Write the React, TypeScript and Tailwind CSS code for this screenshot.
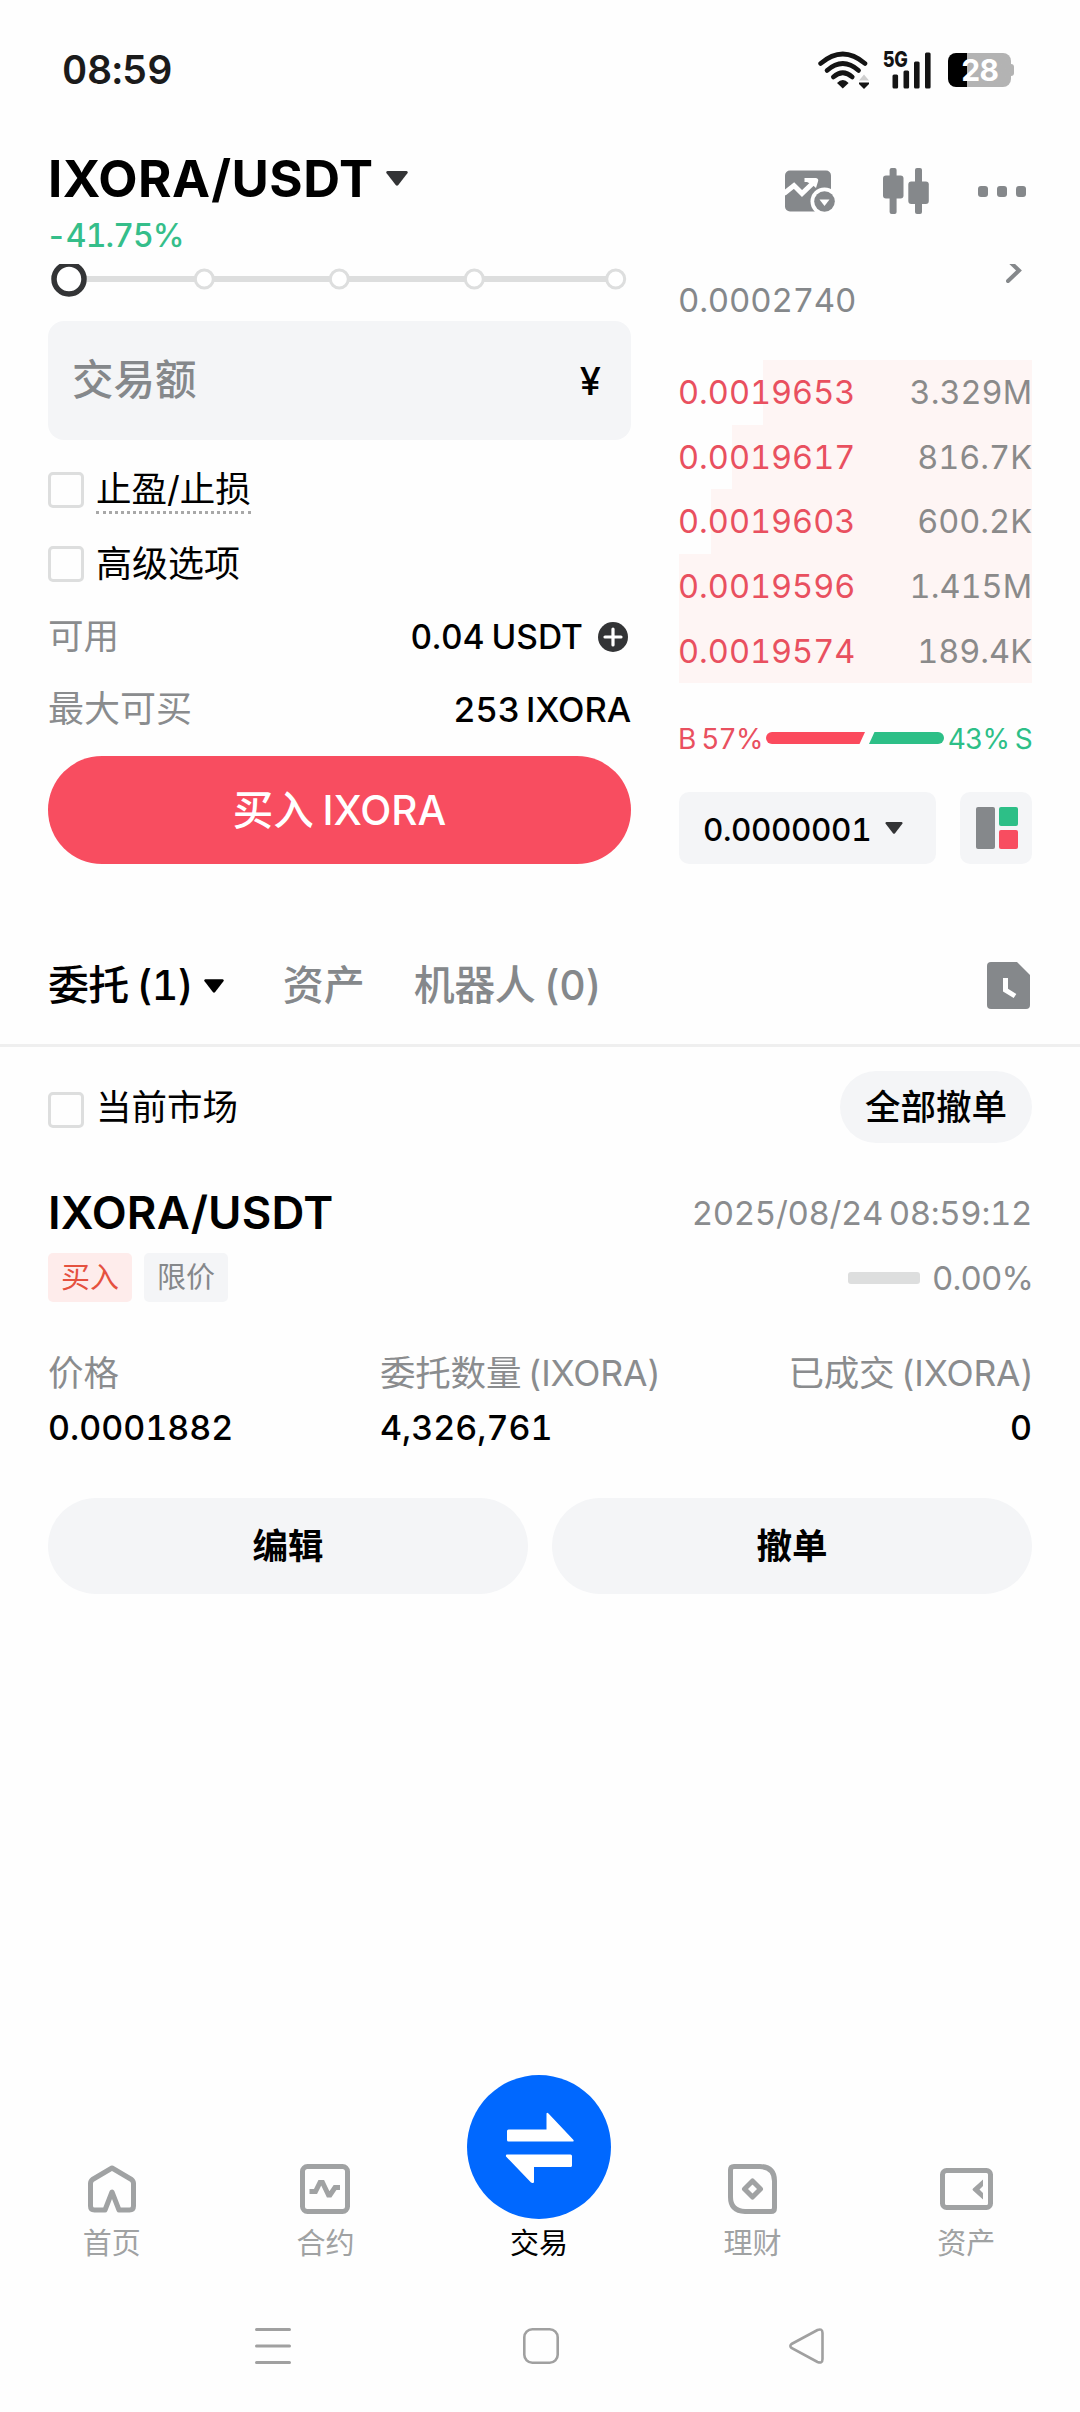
import type { ReactNode } from "react"
import { clsx } from "clsx"

interface Ask {
  price: string
  amount: string
  depth: number
}

const asks: Ask[] = [
  { price: "0.0019653", amount: "3.329M", depth: 269 },
  { price: "0.0019617", amount: "816.7K", depth: 300 },
  { price: "0.0019603", amount: "600.2K", depth: 321 },
  { price: "0.0019596", amount: "1.415M", depth: 353 },
  { price: "0.0019574", amount: "189.4K", depth: 353 },
]

function Caret({ className }: { className?: string }) {
  return (
    <svg viewBox="0 0 22 15" className={className} fill="currentColor">
      <path d="M1.5 0h19q2 .6.9 2.3L12.3 14q-1.3 1.6-2.6 0L.6 2.3Q-.5.6 1.5 0z" />
    </svg>
  )
}

function Checkbox({ className }: { className?: string }) {
  return <span className={clsx("size-9 shrink-0 rounded-[5px] border-3 border-[#dddede]", className)} />
}

function StatusBar() {
  return (
    <div className="flex h-[140px] items-center justify-between pr-[66px] pl-[62px]">
      <span className="text-[39px] font-semibold tracking-[-0.2px] text-[#1b1b1b]">08:59</span>
      <div className="flex items-center text-[#141414]">
        <svg width="52" height="38" viewBox="0 0 52 38" fill="none" stroke="currentColor" strokeWidth="4.6" strokeLinecap="round">
          <path d="M2.6 12.5Q24.8-6.5 47 12.5" />
          <path d="M9 19.5Q24.8 5.5 40.6 19.5" />
          <path d="M15.3 26Q24.8 17.5 34.3 26" />
          <path d="M19 32q5.8-6 11.600 0l-5.8 5.500z" fill="currentColor" stroke="none" />
          <path d="M41 29.5h10L46 23.5z" fill="#cfcfcf" stroke="none" />
          <path d="M41 31.5h10v1.5l-5 5-5-5z" fill="currentColor" stroke="none" />
        </svg>
        <div className="relative ml-[13px] h-[38px] w-[49px]">
          <span className="absolute -top-px left-0 origin-left scale-x-[0.82] text-[22px] leading-[18px] font-extrabold tracking-[-0.5px]">5G</span>
          <svg width="49" height="38" viewBox="0 0 49 38" fill="currentColor">
            <rect x="9.5" y="23.5" width="5.6" height="14" rx="1.5" />
            <rect x="20.5" y="19.5" width="5.6" height="18" rx="1.5" />
            <rect x="31" y="10.5" width="5.6" height="27" rx="1.5" />
            <rect x="42" y="1.5" width="5.6" height="36" rx="1.5" />
          </svg>
        </div>
        <div className="ml-4 flex items-center">
          <div className="flex h-[34px] w-[63px] items-center justify-center rounded-[8px] bg-linear-to-r from-black from-30% to-[#b3b3b3] to-30%">
            <span className="text-[30px] leading-none font-bold tracking-[-0.8px] text-white">28</span>
          </div>
          <div className="h-3 w-[3px] rounded-r-[3px] bg-[#b3b3b3]" />
        </div>
      </div>
    </div>
  )
}

function Header() {
  return (
    <div className="flex h-[124px] justify-between pr-[54px] pl-12">
      <div>
        <div className="flex h-[76px] items-center">
          <h1 className="w-[326px] pt-[2px] text-[51px] font-bold tracking-[0.5px] whitespace-nowrap">IXORA/USDT</h1>
          <Caret className="ml-3 h-[15px] w-[22px] text-[#333436]" />
        </div>
        <div className="-ml-0.5 flex h-10 items-center text-[32px] font-medium tracking-[-0.9px] text-[#35be8a]">-41.75%</div>
      </div>
      <div className="flex h-[102px] items-center text-[#85888b]">
        <svg width="50" height="42" viewBox="0 0 50 42">
          <rect x="0" y="0.5" width="46" height="41" rx="5" fill="currentColor" />
          <path d="M-1 23.5L9 15.5L17 23.5L28 13" fill="none" stroke="#fff" strokeWidth="5" />
          <path d="M19.5 8H31Q34 8.5 33 11.5L31 18L27 14.5L22 12H19.5z" fill="#fff" />
          <circle cx="39.5" cy="31.5" r="14" fill="#fff" />
          <circle cx="39.5" cy="31.5" r="10.3" fill="currentColor" />
          <path d="M34.5 29.5h10l-5 6.5z" fill="#fff" />
        </svg>
        <svg width="46" height="46" viewBox="0 0 46 46" className="ml-12" fill="currentColor">
          <rect x="6.6" y="0" width="7" height="46" rx="2" />
          <rect x="0" y="7.5" width="20.5" height="23" rx="3" />
          <rect x="32" y="0" width="7" height="46" rx="2" />
          <rect x="25.3" y="13.5" width="20.5" height="22.5" rx="3" />
        </svg>
        <svg width="48" height="11" viewBox="0 0 48 11" className="ml-[49px]" fill="currentColor">
          <rect x="0" width="10" height="11" rx="3" />
          <rect x="19" width="10" height="11" rx="3" />
          <rect x="38" width="10" height="11" rx="3" />
        </svg>
      </div>
    </div>
  )
}

function AmountSlider() {
  return (
    <svg width="583" height="57" viewBox="0 0 583 57" fill="#fff" className="overflow-hidden">
      <rect x="30" y="12" width="530" height="6" fill="#dddede" />
      <g stroke="#dddede" strokeWidth="3">
        <circle cx="156.3" cy="15" r="9" />
        <circle cx="291.3" cy="15" r="9" />
        <circle cx="426.3" cy="15" r="9" />
        <circle cx="567.7" cy="15" r="9" />
      </g>
      <circle cx="21" cy="15" r="15" stroke="#333436" strokeWidth="5.5" />
    </svg>
  )
}

function OrderForm() {
  return (
    <div className="flex w-[583px] flex-col">
      <AmountSlider />
      <div className="flex h-[119px] items-center justify-between rounded-[16px] bg-[#f4f5f7] pr-[30px] pl-6">
        <span className="text-[41.5px] font-medium text-[#85888b]">交易额</span>
        <span className="pt-0.5 text-[38px] font-medium">¥</span>
      </div>
      <div className="mt-6 flex h-[52px] items-center gap-3">
        <Checkbox />
        <span className="relative text-[35.5px] leading-[52px]">
          止盈/止损
          <span className="absolute inset-x-0 bottom-0.5 border-b-3 border-dotted border-[#a8a8a8]" />
        </span>
      </div>
      <div className="mt-[22px] flex h-[52px] items-center gap-3">
        <Checkbox />
        <span className="text-[36px]">高级选项</span>
      </div>
      <div className="mt-[11px] flex h-[72px] items-center justify-between">
        <span className="text-[35.5px] text-[#8a8c8e]">可用</span>
        <span className="flex items-center text-[33.5px] font-medium [word-spacing:-2px]">
          0.04 USDT
          <svg width="30" height="30" viewBox="0 0 30 30" className="mr-[3px] ml-[15px]">
            <circle cx="15" cy="15" r="15" fill="#333436" />
            <path d="M15 7v16M7 15h16" stroke="#fff" strokeWidth="3.2" strokeLinecap="round" />
          </svg>
        </span>
      </div>
      <div className="flex h-[72px] items-center justify-between">
        <span className="text-[36px] text-[#8a8c8e]">最大可买</span>
        <span className="pt-px text-[34.5px] font-medium tracking-[-0.1px] [word-spacing:-3px]">253 IXORA</span>
      </div>
      <button className="mt-[11px] h-[108px] rounded-full bg-[#f84d60] pt-0.5 text-[40.5px] font-medium text-white [word-spacing:-2px]">买入 IXORA</button>
    </div>
  )
}

function OrderBook() {
  return (
    <div className="w-[353px]">
      <div className="flex h-24 items-start justify-between overflow-hidden">
        <span className="-ml-px text-[33px] leading-[73px] tracking-[-0.2px] text-[#85888b]">0.0002740</span>
        <svg width="16" height="20" viewBox="0 0 16 20" className="mr-[10px]" fill="none" stroke="#85888b" strokeWidth="4">
          <path d="M2-4L13 6.5L2 17" strokeLinecap="round" />
        </svg>
      </div>
      {asks.map((ask) => (
        <div key={ask.price} className="relative flex h-[64.7px] items-center justify-between pt-0.5 text-[32.5px]">
          <div className="absolute inset-y-0 right-0 bg-[#fef5f4]" style={{ width: ask.depth }} />
          <span className="relative -ml-px text-[#e9505f]">{ask.price}</span>
          <span className="relative text-[#8a8a8a]">{ask.amount}</span>
        </div>
      ))}
      <div className="flex h-[108.5px] items-center justify-between text-[28px] tracking-[-0.8px] whitespace-nowrap [word-spacing:-1px]">
        <span className="-ml-px pt-0.5 text-[#e9505f]">B 57%</span>
        <svg width="178" height="12" viewBox="0 0 178 12" className="shrink-0">
          <path d="M6 0H99L93.5 12H6A6 6 0 0 1 6 0z" fill="#fb4a5d" />
          <path d="M108.5 0H172A6 6 0 0 1 172 12H103z" fill="#2dbf87" />
        </svg>
        <span className="pt-0.5 text-[#2dbf87]">43% S</span>
      </div>
      <div className="flex h-[72px] justify-between">
        <div className="flex w-[257px] items-center justify-between rounded-[10px] bg-[#f4f5f7] pr-[33px] pl-6">
          <span className="pt-[3px] text-[31.5px] font-medium tracking-[-0.4px]">0.0000001</span>
          <Caret className="h-3 w-[18px] text-[#333436]" />
        </div>
        <div className="flex w-[72px] items-center justify-center rounded-[10px] bg-[#f4f5f7]">
          <svg width="42" height="42" viewBox="0 0 42 42" className="ml-0.5">
            <rect width="19" height="42" rx="2" fill="#85888b" />
            <rect x="23" width="19" height="19" rx="2" fill="#2dbf87" />
            <rect x="23" y="23" width="19" height="19" rx="2" fill="#f84d60" />
          </svg>
        </div>
      </div>
    </div>
  )
}

function OrderTabs() {
  return (
    <div className="mt-[60px] flex h-[123px] items-center border-b-3 border-[#efefef] px-12 pt-0.5 text-[41px] text-[#85888b] [word-spacing:-2px]">
      <span className="flex items-center pt-px font-medium tracking-[-0.8px] text-black">
        委托 (1)
        <Caret className="ml-[11px] h-[14px] w-5" />
      </span>
      <span className="ml-[59px] pt-px font-medium">资产</span>
      <span className="ml-[49px] pt-px font-medium tracking-[-0.5px]">机器人 (0)</span>
      <svg width="43" height="47" viewBox="0 0 43 47" className="mr-[2px] ml-auto">
        <path d="M4 0H30L43 13V43q0 4-4 4H4q-4 0-4-4V4Q0 0 4 0z" fill="#85888b" />
        <path d="M18.5 16V28L28 34" fill="none" stroke="#fff" strokeWidth="5" />
      </svg>
    </div>
  )
}

function OrderItem() {
  return (
    <div className="px-12">
      <div className="mt-6 flex h-[72px] items-center gap-3">
        <Checkbox className="mt-[5px]" />
        <span className="pt-0.5 text-[35.5px]">当前市场</span>
        <button className="ml-auto h-[72px] w-48 rounded-full bg-[#f4f5f7] pt-0.5 text-[35.5px] font-medium">全部撤单</button>
      </div>

      <div className="mt-[38px] flex h-16 items-center justify-between">
        <h2 className="text-[45.5px] font-semibold tracking-[0.2px]">IXORA/USDT</h2>
        <span className="pt-0.5 text-[33px] tracking-[-0.35px] text-[#8a8c8e] [word-spacing:-3px]">2025/08/24 08:59:12</span>
      </div>
      <div className="mt-2 flex h-[49px] items-center gap-3 text-[29px]">
        <span className="flex h-full w-[84px] items-center justify-center rounded-[5px] bg-[#feeceb] text-[#e5513f]">买入</span>
        <span className="flex h-full w-[84px] items-center justify-center rounded-[5px] bg-[#f4f5f7] text-[#85888b]">限价</span>
        <span className="ml-auto h-3 w-[72px] rounded-[3px] bg-[#dddede]" />
        <span className="-mr-px pt-[3px] text-[33px] tracking-[-0.9px] text-[#8a8c8e]">0.00%</span>
      </div>

      <div className="mt-[47px] flex h-[50px] items-center text-[35.5px] text-[#8a8c8e] [word-spacing:-3px]">
        <span className="w-[332px]">价格</span>
        <span className="flex-1 tracking-[-0.2px]">委托数量 (IXORA)</span>
        <span className="-mr-0.5 tracking-[-0.2px]">已成交 (IXORA)</span>
      </div>
      <div className="flex h-[57px] items-center text-[34px] font-medium">
        <span className="w-[332px]">0.0001882</span>
        <span className="flex-1">4,326,761</span>
        <span>0</span>
      </div>

      <div className="mt-[42px] flex gap-6 text-[35.5px] font-bold">
        <button className="h-24 flex-1 rounded-full bg-[#f4f5f7] pt-0.5">编辑</button>
        <button className="h-24 flex-1 rounded-full bg-[#f4f5f7] pt-0.5">撤单</button>
      </div>
    </div>
  )
}

function NavItem({ label, active, children }: { label: string; active?: boolean; children: ReactNode }) {
  return (
    <div className={clsx("flex flex-1 flex-col items-center justify-end", active ? "text-black" : "text-[#a0a2a3]")}>
      <div className={clsx("flex items-center justify-center", active ? "size-36 rounded-full bg-[#0068ff]" : "h-[60px]")}>{children}</div>
      <span className="pt-0.5 text-[29px] leading-[46px]">{label}</span>
    </div>
  )
}

function BottomNav() {
  return (
    <nav className="mt-auto mr-[7px] ml-[5px] flex">
      <NavItem label="首页">
        <svg width="48" height="48" viewBox="0 0 48 48" fill="none" stroke="currentColor" strokeWidth="5" strokeLinejoin="round">
          <path d="M17 45H6.5Q2.5 45 2.5 41V18.5Q2.5 16 4.5 14.5L24 3L43.5 14.5Q45.5 16 45.5 18.5V41Q45.5 45 41.5 45H31L24 27z" />
        </svg>
      </NavItem>
      <NavItem label="合约">
        <svg width="50" height="50" viewBox="0 0 50 50" fill="none" stroke="currentColor" strokeWidth="5">
          <rect x="2.5" y="2.5" width="45" height="45" rx="5" />
          <path d="M9.5 27.5H15.5L20 18.5H22.5L28.5 31H30L35 23.5H40" />
        </svg>
      </NavItem>
      <NavItem label="交易" active>
        <svg width="70" height="71" viewBox="0 0 70 71" fill="#fff" className="ml-[3px]">
          <path d="M3.5 17.5H41.500V2Q41.500 0 43.500 1.5L68.500 28Q69 29.5 67.5 29.5H3.5Q2 29.5 2 28V19Q2 17.5 3.5 17.5z" />
          <path d="M65.5 42.5H2Q.5 42.5 1 44.5L26 70.5Q29 72 29 69.5V55H65.5Q67 55 67 53.5V44Q67 42.5 65.5 42.5z" />
        </svg>
      </NavItem>
      <NavItem label="理财">
        <svg width="49" height="50" viewBox="0 0 49 50" fill="none" stroke="currentColor" strokeWidth="5">
          <path d="M6 2.5H32Q46.5 3 46.5 17V44Q46.5 47.5 43 47.5H17Q2.5 47 2.5 33V6Q2.5 2.5 6 2.5z" />
          <path d="M24.5 17L32.5 25L24.5 33L16.5 25z" strokeLinejoin="round" />
        </svg>
      </NavItem>
      <NavItem label="资产">
        <svg width="53" height="42" viewBox="0 0 53 42">
          <rect x="2.5" y="2.5" width="48" height="37" rx="4" fill="none" stroke="currentColor" strokeWidth="5" />
          <path d="M43 11.5V18L39.5 21.5L43 25V31.5L33 22.5Q32 21.5 33 20.5z" fill="currentColor" />
        </svg>
      </NavItem>
    </nav>
  )
}

function SystemNav() {
  return (
    <div className="flex h-[145px] items-center justify-between pt-[13px] pr-64 pl-[255px]">
      <svg width="36" height="38" viewBox="0 0 36 38" stroke="#a0a0a0" strokeWidth="3" strokeLinecap="round">
        <path d="M1.5 2.5h33M1.5 19h33M1.5 35.5h33" />
      </svg>
      <svg width="36" height="36" viewBox="0 0 36 36" fill="none" stroke="#a0a0a0" strokeWidth="2.6" className="ml-0.5">
        <rect x="1.3" y="1.3" width="33.4" height="33.4" rx="8" />
      </svg>
      <svg width="35" height="36" viewBox="0 0 35 36" fill="none" stroke="#a0a0a0" strokeWidth="2.6">
        <path d="M2.5 16L28.5 2Q33.5 0 33.5 5V31Q33.5 36 28.5 34L2.5 20Q.2 18 2.5 16z" />
      </svg>
    </div>
  )
}

export default function App() {
  return (
    <div className="flex h-[2412px] w-[1080px] flex-col overflow-hidden bg-[#fefefe] font-['Inter','Noto_Sans_CJK_SC',sans-serif] text-black tabular-nums">
      <StatusBar />
      <Header />
      <div className="flex justify-between px-12">
        <OrderForm />
        <OrderBook />
      </div>
      <OrderTabs />
      <OrderItem />
      <BottomNav />
      <SystemNav />
    </div>
  )
}
